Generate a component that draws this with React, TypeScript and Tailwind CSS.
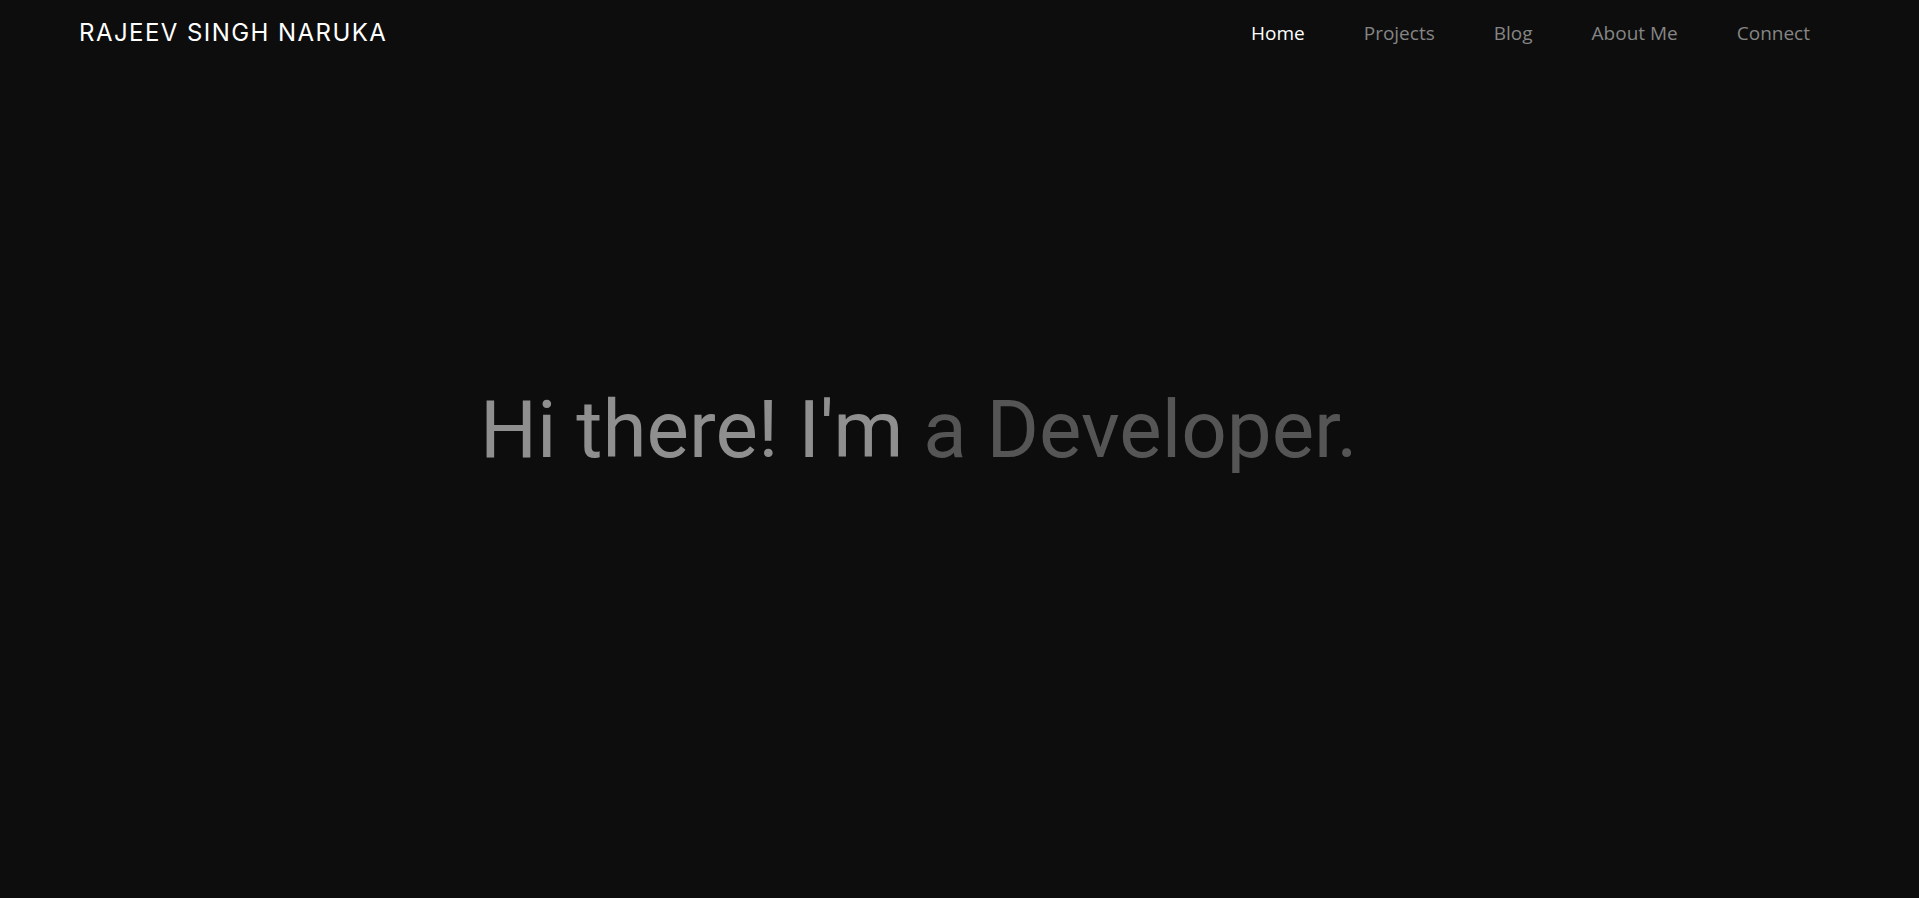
import React from "react";

export default function App() {
  const links = ["Home", "Projects", "Blog", "About Me", "Connect"];
  return (
    <div className="min-h-screen w-full bg-[#0d0d0d]">
      <header className="flex h-[66px] items-center justify-between pl-[79px] pr-[109px]">
        <div
          className="text-[24px] tracking-[0.06em] text-white"
          style={{ fontFamily: "Inter, 'Noto Sans', sans-serif" }}
        >
          RAJEEV SINGH NARUKA
        </div>
        <nav
          className="flex items-center gap-[59px] text-[19px]"
          style={{ fontFamily: "'Open Sans', 'Noto Sans', sans-serif" }}
        >
          {links.map((l, i) => (
            <a
              key={l}
              href="#"
              className={i === 0 ? "text-white" : "text-[#858585]"}
            >
              {l}
            </a>
          ))}
        </nav>
      </header>
      <main className="pl-[480px] pt-[317px]">
        <h1
          className="text-[80px] font-normal text-[#8f8f8f]"
          style={{ fontFamily: "Roboto, 'Liberation Sans', sans-serif", lineHeight: "normal" }}
        >
          Hi there! I'm <span className="text-[#555555]">a Developer.</span>
        </h1>
      </main>
    </div>
  );
}
